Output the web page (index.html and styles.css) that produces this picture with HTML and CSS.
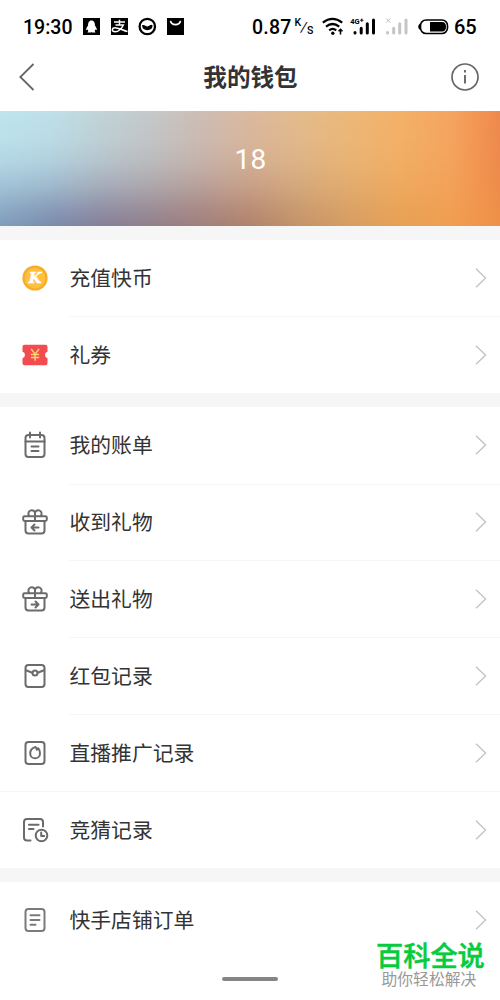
FILE: index.html
```html
<!DOCTYPE html>
<html lang="zh-CN">
<head>
<meta charset="utf-8">
<title>我的钱包</title>
<link rel="stylesheet" href="styles.css">
</head>
<body>
<svg class="defs" width="0" height="0">
  <symbol id="chevron" viewBox="0 0 12 20"><path d="M1 .8 10.600 10 1 19.200" fill="none" stroke="#c4c4c4" stroke-width="1.400"/></symbol>
  <symbol id="gift" viewBox="0 0 28 28"><path d="M4.500 13v9.500q0 3 3 3h13q3 0 3-3V13M3.600 8.200h20.800q1.400 0 1.400 1.400v2q0 1.400-1.400 1.400H3.600q-1.400 0-1.400-1.400v-2q0-1.400 1.400-1.400zM14 4.500V13M8.300 8A3.400 3.400 0 1 1 14 4.600 3.400 3.400 0 1 1 19.700 8"/></symbol>
</svg>
<main class="screen">
  <header class="status">
    <span class="time">19:30</span>
    <svg class="app-icons" width="103" height="20" viewBox="0 0 103 20">
      <path d="M0 1h17v17H0z"/><path d="M8.500 3.500C5.800 3.500 5 6 5 8.500 4 10 3 11.500 3.200 13.200L4.600 12.600 5.300 14 4.500 15.500H8l.5-.5.5.5h3.500l-.8-1.500.7-1.400 1.400.6C14 11.500 13 10 12 8.500 12 6 11.200 3.500 8.500 3.500z" fill="#fff"/>
      <path d="M28 1h17v17H28z"/><path d="M31 5h11M36.500 2.700v5M32.500 8h7.800c-1.500 3.500-5 6.800-8 6.800-4.300 0-3.800-4.300.7-3.900 4 .3 7 2.600 11.500 3.700" fill="none" stroke="#fff" stroke-width="1.500"/>
      <circle cx="64.300" cy="9.500" r="7.700" fill="#fff" stroke="#000" stroke-width="2.300"/><path d="M59 8.500c2.200-1.500 4 1.500 6.200.8 2-.8 2.500-2.300 4.500-.8a5.400 5.400 0 0 1-10.700 0z"/>
      <path d="M84 1h17v17H84z"/><path d="M87.500 3.800c1 5 9 5 10 0" fill="none" stroke="#fff" stroke-width="1.700"/>
    </svg>
    <span class="rate">0.87</span>
    <span class="unit"><sup>K</sup><i>/</i><sub>S</sub></span>
    <svg class="signals" width="89" height="20" viewBox="0 0 89 20">
      <g fill="none" stroke="#000" stroke-width="2.200"><path d="M.8 5.700q9.700-7.500 19.400 0M4 9.700q6.600-5.400 13.200 0M7.200 13.300q3.500-2.800 7 0"/></g><circle cx="10.800" cy="16.300" r="1.700"/>
      <path d="M18.500 17.500v-5M16.500 14.300l2-2 2 2" fill="none" stroke="#000" stroke-width="1.500"/>
      <g fill="none" stroke="#000" stroke-width="3" stroke-linecap="round"><path d="M33 15.500v.5M39.200 11.200V16M45.300 6.700V16M51.500 3V16"/></g>
      <text class="net" x="28.300" y="6.700">4G</text><path d="M38.200 3.200h3.200M39.800 1.600v3.200" stroke="#000"/>
      <g fill="none" stroke="#c5c5c5" stroke-width="3" stroke-linecap="round"><path d="M65.500 15.500v.5M71.700 11.200V16M77.700 6.700V16M84 3V16"/></g><path d="M64.300 1.500l4 4m0-4-4 4" stroke="#bbb"/>
    </svg>
    <svg class="battery" width="32" height="18" viewBox="0 0 32 18"><rect x="3.500" y="2" width="27" height="13.500" rx="5.500" fill="#fff" stroke="#000" stroke-width="1.600"/><path d="M3 5.500Q-.6 8.700 3 12z"/><path d="M13 4h12q4 0 4 4.700T25 13.500H13z"/></svg>
    <span class="level">65</span>
  </header>
  <nav class="nav">
    <svg width="16" height="28" viewBox="0 0 16 28"><path d="M14.500 1 1.300 14l13.200 13" fill="none" stroke="#666" stroke-width="1.800"/></svg>
    <h1>我的钱包</h1>
    <svg width="30" height="30" viewBox="0 0 30 30"><circle cx="15" cy="15" r="13" fill="none" stroke="#666" stroke-width="1.700"/><path d="M15 13v8.500M15 8v2.600" stroke="#666" stroke-width="1.900"/></svg>
  </nav>
  <section class="banner"><span>18</span></section>
  <ul class="group">
    <li><svg class="icon" viewBox="0 0 28 28"><circle cx="14" cy="14" r="12.600" fill="#f6ae25"/><circle cx="14" cy="14" r="10.300" fill="#ffbf40"/><text class="coin" x="14" y="19" text-anchor="middle">K</text></svg><span>充值快币</span><svg class="go"><use href="#chevron"/></svg></li>
    <li><svg class="icon" viewBox="0 0 28 28"><path d="M3.500 3.800h21q2 0 2 2v5a3.300 3.300 0 0 0 0 6.400v5q0 2-2 2h-21q-2 0-2-2v-5a3.300 3.300 0 0 0 0-6.400v-5q0-2 2-2z" fill="#f24c50"/><path d="M10.200 8l3.900 5.200L18 8M14.100 13.200v6.600M10 13.500h8.200M10 16.500h8.200" fill="none" stroke="#ffd56b" stroke-width="1.400"/></svg><span>礼券</span><svg class="go"><use href="#chevron"/></svg></li>
  </ul>
  <ul class="group">
    <li><svg class="icon line" viewBox="0 0 28 28"><rect x="4.500" y="4" width="19" height="22" rx="3"/><path d="M4.500 10.500h19M9 1.500v5M19 1.500v5M10.500 15.500h7M10.500 20h7"/></svg><span>我的账单</span><svg class="go"><use href="#chevron"/></svg></li>
    <li><svg class="icon line" viewBox="0 0 28 28"><use href="#gift"/><path d="M17.500 19.500h-7M13.500 16.500l-3 3 3 3"/></svg><span>收到礼物</span><svg class="go"><use href="#chevron"/></svg></li>
    <li><svg class="icon line" viewBox="0 0 28 28"><use href="#gift"/><path d="M10.500 19.500h7M14.500 16.500l3 3-3 3"/></svg><span>送出礼物</span><svg class="go"><use href="#chevron"/></svg></li>
    <li><svg class="icon line" viewBox="0 0 28 28"><rect x="4.500" y="3" width="19" height="22" rx="3"/><path d="M5 8.300l6.300 2.400M16.700 10.700 23 8.300"/><circle cx="14" cy="11" r="2.500"/></svg><span>红包记录</span><svg class="go"><use href="#chevron"/></svg></li>
    <li class="full"><svg class="icon line" viewBox="0 0 28 28"><rect x="4.500" y="3" width="19" height="22" rx="3"/><path d="M14.500 8c-3 .9-5.300 3.400-5.300 6.400a4.900 4.900 0 0 0 9.800 0c0-2.200-.6-3.800-1.800-5.200l-1.400 1.600c-.1-1.200-.5-2.100-1.300-2.800z"/></svg><span>直播推广记录</span><svg class="go"><use href="#chevron"/></svg></li>
    <li><svg class="icon line" viewBox="0 0 28 28"><path d="M9.500 24.500H6q-3 0-3-3V6q0-3 3-3h13q3 0 3 3v4.500M8 8.700h9.500M8 13h4.500"/><circle cx="20.500" cy="19.500" r="5.800"/><path d="M20.200 16.500v3.500h3"/></svg><span>竞猜记录</span><svg class="go"><use href="#chevron"/></svg></li>
  </ul>
  <ul class="group">
    <li><svg class="icon line pale" viewBox="0 0 28 28"><rect x="4.500" y="3" width="19" height="22" rx="3"/><path d="M9.500 9.300h9M9.500 14h9M9.500 18.700h5"/></svg><span>快手店铺订单</span><svg class="go"><use href="#chevron"/></svg></li>
  </ul>
  <div class="home-bar"></div>
  <aside class="mark"><strong>百科全说</strong><span>助你轻松解决</span></aside>
</main>
</body>
</html>
```
FILE: styles.css
```css
* { box-sizing: border-box; }
body { margin: 0; background: #fff; color: #333; font-family: "Noto Sans CJK SC", sans-serif; }
.defs { position: absolute; }
.screen { position: relative; width: 500px; height: 1000px; overflow: hidden; display: flex; flex-direction: column; background: #f6f6f6; }
.status { height: 54px; flex: none; display: flex; align-items: center; padding-left: 23px; background: #fff; color: #000; font: 500 20px Roboto, sans-serif; }
.time { width: 60px; font-size: 19.500px; }
.app-icons { margin-right: 66px; }
.rate { width: 42px; font-size: 19.500px; letter-spacing: .2px; }
.unit { width: 28px; height: 18px; display: flex; font-size: 10.500px; line-height: 10px; }
.unit sup, .unit sub { font-size: 10.500px; line-height: 10px; vertical-align: baseline; }
.unit i { font-size: 14px; line-height: 19px; font-weight: 400; font-style: normal; transform: skewX(-12deg); }
.unit sup { margin-left: .5px; }
.unit sub { align-self: flex-end; }
.net { font: 700 7.500px Roboto, sans-serif; }
.battery { margin: 0 5px 0 6px; }
.nav { height: 57px; flex: none; display: flex; align-items: center; justify-content: space-between; padding: 0 20px 12px 19px; background: #fff; }
.nav h1 { margin: -2px 0 0 16px; font-size: 23.600px; line-height: 34px; font-weight: 700; }
.banner { height: 115px; flex: none; display: flex; justify-content: center; padding: 32px 0 0 1px; position: relative; isolation: isolate; color: #fff; font: 400 28px/34px Roboto, sans-serif; letter-spacing: .3px; background: linear-gradient(90deg, #bee5ef 0, #bfe0e9 10%, #c1d4d8 20%, #c5c9c9 30%, #cfbdb3 41%, #dbb99e 50%, #e3bb8c 60%, #edb878 70%, #f4b168 80%, #f5a560 90%, #f39453 96%, #ee894e 100%); }
.banner::after { content: ""; position: absolute; inset: 0; z-index: -1; background: linear-gradient(90deg, #809cbc 0, #7b8aab 11%, #867f98 21%, #917f8b 30%, #a07e7c 40%, #b1836c 50%, #c49369 60%, #d69d62 70%, #e7a154 80%, #f09e51 90%, #ee9048 100%); -webkit-mask-image: linear-gradient(transparent, rgba(0,0,0,.06) 25%, rgba(0,0,0,.2) 45%, rgba(0,0,0,.46) 65%, rgba(0,0,0,.8) 85%, #000); mask-image: linear-gradient(transparent, rgba(0,0,0,.06) 25%, rgba(0,0,0,.2) 45%, rgba(0,0,0,.46) 65%, rgba(0,0,0,.8) 85%, #000); }
.group { margin: 13.700px 0 0; padding: 0; list-style: none; background: #fff; flex: none; }
.group:last-of-type { flex: 1; }
.group li { height: 76.850px; display: flex; align-items: center; padding: 0 13px 0 20.500px; position: relative; font-size: 20.800px; line-height: 30px; }
.group li:not(:last-child)::after { content: ""; position: absolute; left: 69px; right: 0; bottom: -.6px; height: 1px; background: #f5f5f5; }
.group .full:not(:last-child)::after { left: 0; }
.group li span { margin: -2px 0 0 21px; }
.icon { width: 28px; height: 28px; flex: none; }
.line { fill: none; stroke: #6b6b6b; stroke-width: 2; stroke-linecap: round; stroke-linejoin: round; }
.pale { stroke: #7b7b7b; }
.coin { font: italic 700 14.500px "DejaVu Serif", serif; fill: #fff; stroke: #fff; stroke-width: .5px; }
.go { width: 12px; height: 20px; margin-left: auto; }
.home-bar { position: absolute; left: 222px; top: 977px; width: 56px; height: 4px; border-radius: 2px; background: #858585; }
.mark { position: absolute; left: 376px; top: 940px; width: 110px; display: flex; flex-direction: column; }
.mark strong { font-size: 27.200px; line-height: 29px; font-weight: 500; -webkit-text-stroke: .5px #05cc3d; color: #05cc3d; white-space: nowrap; }
.mark span { margin-left: 5.500px; font-size: 15.800px; line-height: 20px; color: #999; white-space: nowrap; }
```
